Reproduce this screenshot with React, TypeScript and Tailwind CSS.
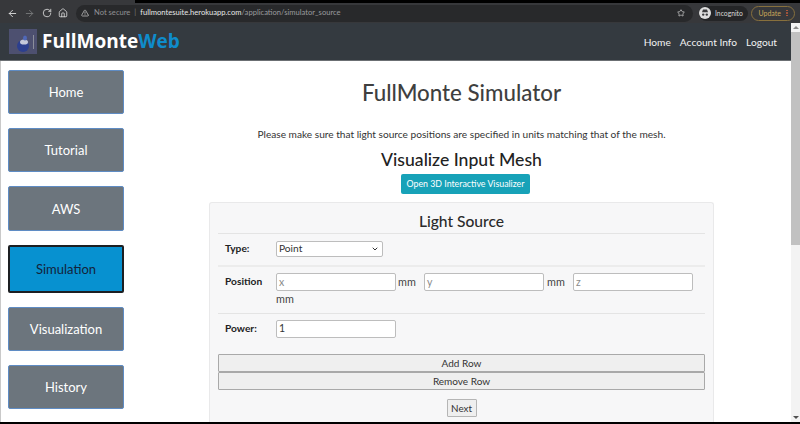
import React from "react";
import { ArrowLeft, ArrowRight, RotateCw, Home, TriangleAlert, Star, ChevronDown } from "lucide-react";

const font = { fontFamily: 'Lato, "Open Sans", sans-serif' };

function SideButton({ label, active, h = "h-[44px]" }: { label: string; active?: boolean; h?: string }) {
  return (
    <div
      className={
        active
          ? "flex h-[48px] w-[116px] items-center justify-center rounded-[2px] border-2 border-[#1c1f22] bg-[#0791d0] pt-[2px] text-[13px] text-[#14233a]"
          : `flex ${h} w-[116px] items-center justify-center rounded-[2px] border border-[#5f8cc4] bg-[#6c757d] pt-[2px] text-[13px] text-white`
      }
    >
      {label}
    </div>
  );
}

function TextField({ placeholder, value }: { placeholder?: string; value?: string }) {
  return (
    <div className={`flex h-[18px] w-[120px] shrink-0 items-center rounded-[2px] border border-[#bdbdbd] bg-white pl-[2px] text-[10.5px] ${value ? "text-[#333]" : "text-[#8a8a8a]"}`}>
      {value ?? placeholder}
    </div>
  );
}

function WideButton({ label }: { label: string }) {
  return (
    <div className="flex h-[18px] items-center justify-center rounded-[1px] border border-[#a9a9a9] bg-[#efefef] text-[10px] text-[#333]">
      {label}
    </div>
  );
}

export default function App() {
  return (
    <div style={font} className="flex h-[424px] w-[800px] flex-col overflow-hidden bg-white">
      {/* browser top */}
      <div className="h-[3px] shrink-0 bg-black">
        <div className="h-full w-[135px] bg-[#37383b]" />
      </div>
      <div className="flex h-[20px] shrink-0 items-center bg-[#37383b] pl-[7px] pr-[5px] text-[#dcdcdc]">
        <ArrowLeft size={11} strokeWidth={2} className="mr-[6px]" />
        <ArrowRight size={11} strokeWidth={2} className="mr-[7px] text-[#77787a]" />
        <RotateCw size={10} strokeWidth={2} className="mr-[6px]" />
        <Home size={10} strokeWidth={2} className="mr-[8px]" />
        <div className="flex h-[17px] flex-1 items-center rounded-full bg-[#28292b] pl-[5px] pr-[8px] text-[7.6px]">
          <TriangleAlert size={8} strokeWidth={2.4} className="mr-[5px] text-[#bbb]" />
          <span className="text-[#909194]">Not secure</span>
          <span className="mx-[4px] text-[#77787a]">|</span>
          <span className="text-[#e6e6e6]">fullmontesuite.herokuapp.com</span>
          <span className="text-[#9a9b9e]">/application/simulator_source</span>
          <Star size={8} className="ml-auto" />
        </div>
        <div className="ml-[6px] flex h-[15px] w-[49px] items-center gap-[4px] rounded-full bg-[#242527] text-[6.8px] text-[#d8d8d8]">
          <svg width="12" height="12" viewBox="0 0 12 12" className="shrink-0">
            <circle cx="6" cy="6" r="6" fill="#dedede" />
            <path d="M3 5.2h6l-1-2.6H4z" fill="#3a3a3c" />
            <circle cx="4.2" cy="7.6" r="1.2" fill="#3a3a3c" />
            <circle cx="7.8" cy="7.6" r="1.2" fill="#3a3a3c" />
          </svg>
          Incognito
        </div>
        <div className="ml-[3px] flex h-[15px] w-[44px] items-center justify-center gap-[5px] rounded-full border border-[#87703d] text-[7px] text-[#c9a659]">
          Update
          <span className="flex flex-col gap-[1px]">
            <span className="h-[1.5px] w-[1.5px] rounded-full bg-[#c05a3c]" />
            <span className="h-[1.5px] w-[1.5px] rounded-full bg-[#c05a3c]" />
            <span className="h-[1.5px] w-[1.5px] rounded-full bg-[#c05a3c]" />
          </span>
        </div>
      </div>

      <div className="flex min-h-0 flex-1">
        <div className="flex min-w-0 flex-1 flex-col">
          {/* navbar */}
          <div className="flex h-[38px] shrink-0 items-center border-b border-[#6b6f73] bg-[#343a40] pl-[9px] pr-[14px]">
            <svg width="28" height="25" viewBox="0 0 28 25" className="mr-[5px]">
              <rect width="28" height="25" fill="#4d5070" />
              <rect x="24" y="6" width="1" height="14" fill="#8b8e9b" />
              <ellipse cx="14" cy="17" rx="6" ry="6" fill="#2c3f8f" />
              <ellipse cx="15" cy="13" rx="4" ry="2.6" fill="#c4c8da" />
              <ellipse cx="16" cy="9" rx="2" ry="2.6" fill="#5068b8" />
            </svg>
            <span style={{ fontFamily: '"Open Sans", sans-serif' }} className="text-[19px] font-bold text-white">
              FullMonte<span className="text-[#0f8ccb]">Web</span>
            </span>
            <div className="ml-auto flex gap-[9px] pt-[2px] text-[10.2px] text-[#f2f2f2]">
              <span>Home</span>
              <span>Account Info</span>
              <span>Logout</span>
            </div>
          </div>

          <div className="flex min-h-0 flex-1 border-l border-[#c9c9c9]">
            {/* sidebar */}
            <div className="flex w-[123px] shrink-0 flex-col items-end pt-[9px]">
              <SideButton label="Home" />
              <div className="h-[14px] shrink-0" />
              <SideButton label="Tutorial" />
              <div className="h-[14px] shrink-0" />
              <SideButton label="AWS" h="h-[45px]" />
              <div className="h-[14px] shrink-0" />
              <SideButton label="Simulation" active />
              <div className="h-[14px] shrink-0" />
              <SideButton label="Visualization" />
              <div className="h-[14px] shrink-0" />
              <SideButton label="History" />
            </div>

            {/* main */}
            <div className="flex min-w-0 flex-1 flex-col items-center pl-[85px] pr-[77px] text-[#333]">
              <h1 className="mt-[17px] whitespace-nowrap text-[22.3px] font-medium leading-[30px] text-[#3f3f3f]">FullMonte Simulator</h1>
              <p className="mt-[19px] whitespace-nowrap text-[10.15px] leading-[14px]">
                Please make sure that light source positions are specified in units matching that of the mesh.
              </p>
              <h2 className="mt-[9px] whitespace-nowrap text-[17.6px] font-medium leading-[20px] text-[#222]">Visualize Input Mesh</h2>
              <div className="ml-[8px] mt-[4px] flex h-[20px] w-[129px] shrink-0 items-center justify-center whitespace-nowrap rounded-[2px] bg-[#17a2b8] text-[8.8px] text-white">
                Open 3D Interactive Visualizer
              </div>

              {/* card */}
              <div className="mt-[8px] min-h-0 w-full flex-1 overflow-hidden rounded-t-[3px] border border-b-0 border-[#e9e9ea] bg-[#f7f7f8] px-[8px] pt-[8px]">
                <h3 className="text-center text-[15.6px] font-medium leading-[20px] text-[#2a2a2a]">Light Source</h3>
                <div className="mt-[2px] flex h-[32px] items-center border-t border-[#e4e4e4] pb-[2px] pl-[7px]">
                  <span className="w-[51px] text-[10.2px] font-bold text-[#222]">Type:</span>
                  <div className="flex h-[16px] w-[107px] items-center justify-between rounded-[2px] border border-[#bdbdbd] bg-white pl-[2px] pr-[3px] text-[10.2px] text-[#333]">
                    Point
                    <ChevronDown size={8} strokeWidth={3} />
                  </div>
                </div>
                <div className="flex h-[48px] border-t-2 border-[#ececec] pl-[7px] pt-[6px]">
                  <span className="mt-[1px] w-[51px] shrink-0 text-[10.2px] font-bold leading-[14px] text-[#222]">Position</span>
                  <div className="flex flex-1 flex-wrap content-start items-center text-[10.8px] leading-[14px] text-[#444]">
                    <TextField placeholder="x" />
                    <span className="ml-[2px] w-[26px]">mm</span>
                    <TextField placeholder="y" />
                    <span className="ml-[3px] w-[26px]">mm</span>
                    <TextField placeholder="z" />
                    <span className="mt-[1px] w-full">mm</span>
                  </div>
                </div>
                <div className="flex h-[41px] border-t border-[#e4e4e4] pl-[7px] pt-[6px]">
                  <span className="mt-[1px] w-[51px] text-[10.2px] font-bold leading-[14px] text-[#222]">Power:</span>
                  <TextField value="1" />
                </div>
                <WideButton label="Add Row" />
                <WideButton label="Remove Row" />
                <div className="mt-[9px] flex justify-center">
                  <div className="flex h-[18px] w-[30px] items-center justify-center rounded-[1px] border border-[#b5b5b5] bg-[#efefef] text-[9.8px] text-[#333]">Next</div>
                </div>
              </div>
            </div>
          </div>
        </div>
        {/* scrollbar */}
        <div className="flex w-[9px] shrink-0 flex-col items-center bg-[#f3f3f3]">
          <div className="flex h-[9px] w-full items-center justify-center">
            <div className="h-0 w-0 border-x-[3px] border-b-[3px] border-x-transparent border-b-[#8a8a8a]" />
          </div>
          <div className="h-[213px] w-full bg-[#c1c1c1]" />
          <div className="mt-auto flex h-[9px] w-full items-center justify-center">
            <div className="h-0 w-0 border-x-[3px] border-t-[3px] border-x-transparent border-t-[#505050]" />
          </div>
        </div>
      </div>
      <div className="h-[2px] shrink-0 bg-black" />
    </div>
  );
}
